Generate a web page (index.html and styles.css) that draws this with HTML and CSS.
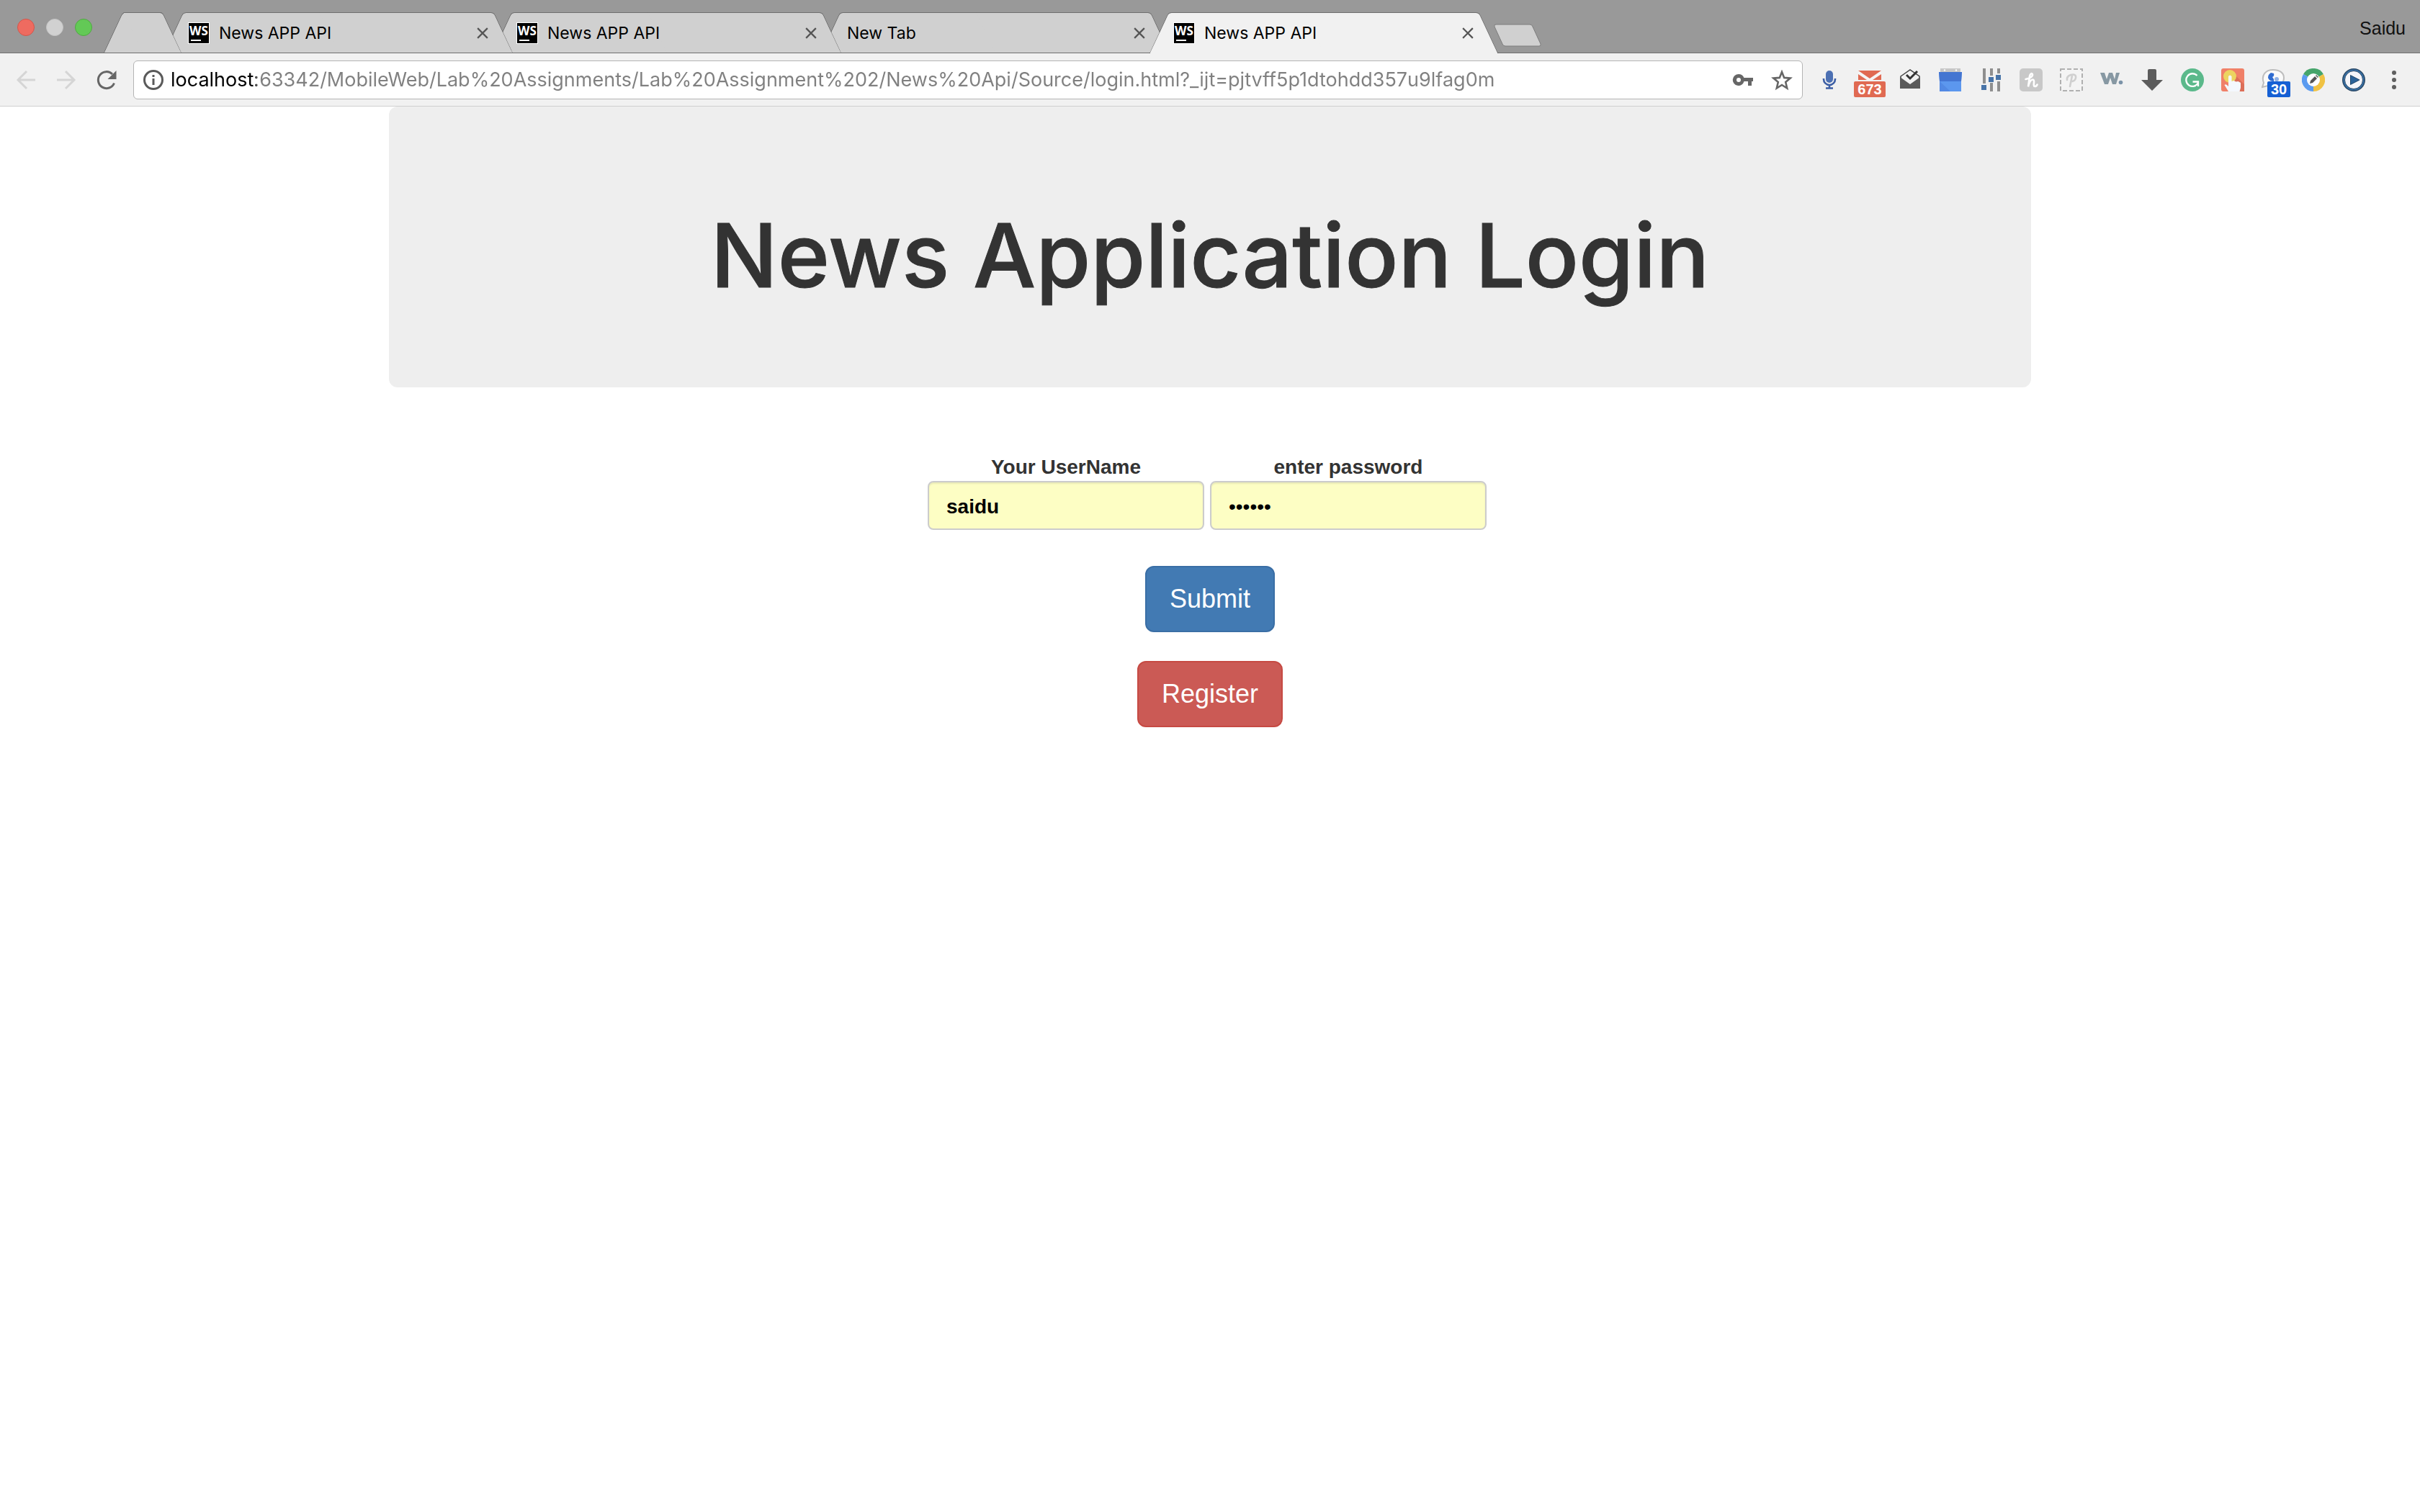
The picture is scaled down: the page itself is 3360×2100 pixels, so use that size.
FILE: index.html
```html
<!DOCTYPE html>
<html lang="en">
<head>
<meta charset="utf-8">
<title>News APP API</title>
<link rel="stylesheet" href="styles.css">
</head>
<body>
<header class="browser">
  <div class="strip">
    <div class="lights">
      <button class="light light-close" aria-label="Close window"></button>
      <button class="light light-min" aria-label="Minimize window"></button>
      <button class="light light-max" aria-label="Zoom window"></button>
    </div>
    <nav class="tabs" aria-label="Tabs">
      <div class="tab tab-pinned"></div>
      <div class="tab tab-2">
        <svg class="favicon" viewBox="0 0 30 30"><rect width="30" height="30" fill="#fff"/><rect x="1" y="1" width="28" height="28"/><text x="15" y="18" class="favicon-text">WS</text><rect x="4" y="24" width="14" height="2" fill="#fff"/></svg>
        <span class="tab-title">News APP API</span>
        <button class="tab-close" aria-label="Close tab"><svg viewBox="0 0 14 14"><path d="M1 1l12 12M13 1L1 13"/></svg></button>
      </div>
      <div class="tab tab-3">
        <svg class="favicon" viewBox="0 0 30 30"><rect width="30" height="30" fill="#fff"/><rect x="1" y="1" width="28" height="28"/><text x="15" y="18" class="favicon-text">WS</text><rect x="4" y="24" width="14" height="2" fill="#fff"/></svg>
        <span class="tab-title">News APP API</span>
        <button class="tab-close" aria-label="Close tab"><svg viewBox="0 0 14 14"><path d="M1 1l12 12M13 1L1 13"/></svg></button>
      </div>
      <div class="tab tab-4">
        <span class="tab-title">New Tab</span>
        <button class="tab-close" aria-label="Close tab"><svg viewBox="0 0 14 14"><path d="M1 1l12 12M13 1L1 13"/></svg></button>
      </div>
      <div class="tab tab-active">
        <svg class="favicon" viewBox="0 0 30 30"><rect width="30" height="30" fill="#fff"/><rect x="1" y="1" width="28" height="28"/><text x="15" y="18" class="favicon-text">WS</text><rect x="4" y="24" width="14" height="2" fill="#fff"/></svg>
        <span class="tab-title">News APP API</span>
        <button class="tab-close" aria-label="Close tab"><svg viewBox="0 0 14 14"><path d="M1 1l12 12M13 1L1 13"/></svg></button>
      </div>
      <button class="new-tab" aria-label="New tab"><svg viewBox="0 0 66 34"><path d="M3 1H50Q53 1 54 4L65 28Q66 31 63 31H16Q13 31 12 28L1 4Q0 1 3 1Z" fill="#d0d0d0" stroke="#7d7d7d" stroke-width="1"/></svg></button>
    </nav>
    <button class="profile">Saidu</button>
  </div>

  <div class="toolbar">
    <div class="nav-buttons">
      <button class="icon" aria-label="Back"><svg viewBox="0 0 32 32"><path d="M29 16H5M17 4L5 16l12 12" fill="none" stroke="#d5d5d5" stroke-width="3"/></svg></button>
      <button class="icon" aria-label="Forward"><svg viewBox="0 0 32 32"><path d="M3 16h24M15 4l12 12-12 12" fill="none" stroke="#d5d5d5" stroke-width="3"/></svg></button>
      <button class="icon" aria-label="Reload"><svg viewBox="0 0 32 32"><path d="M26.500 20.500A11.500 11.500 0 1 1 24 8" fill="none" stroke="#666" stroke-width="3"/><path d="M29.500 3v12H17.500z" fill="#666"/></svg></button>
    </div>
    <div class="omnibox">
      <svg class="info" viewBox="0 0 28 28"><circle cx="14" cy="14" r="12.500" fill="none" stroke="#5a5a5a" stroke-width="3"/><path d="M12.500 7h3v3h-3zM12.500 12h3v9h-3z" fill="#5a5a5a"/></svg>
      <input class="address" type="text" aria-label="Address" value="localhost:63342/MobileWeb/Lab%20Assignments/Lab%20Assignment%202/News%20Api/Source/login.html?_ijt=pjtvff5p1dtohdd357u9lfag0m">
      <button class="box-icon" aria-label="Saved passwords"><svg viewBox="0 0 32 32"><path fill-rule="evenodd" d="M10 8a8 8 0 0 1 7.400 5H30v5h-2v6h-5v-6h-5.500A8 8 0 1 1 10 8zm0 5a3 3 0 1 0 0 6 3 3 0 0 0 0-6z" fill="#666"/></svg></button>
      <button class="box-icon" aria-label="Bookmark"><svg viewBox="0 0 32 32"><path d="M16 5l3.200 7.900 8.500.7-6.500 5.500 2 8.400-7.200-4.500-7.200 4.500 2-8.400-6.500-5.500 8.500-.7z" fill="none" stroke="#666" stroke-width="2.600"/></svg></button>
    </div>
    <div class="extensions">
      <button class="icon" aria-label="Voice search"><svg viewBox="0 0 32 32"><rect x="11" y="3" width="10" height="17" rx="5" fill="#4c70b3"/><path d="M8 14v1a8 8 0 0 0 16 0v-1M16 22v6M11 27.500h10" fill="none" stroke="#3d5fa5" stroke-width="2.600"/></svg></button>
      <button class="icon" aria-label="Mail"><svg viewBox="0 0 32 32"><path d="M0 3h32v13H0z" fill="#e06a52"/><path d="M0 3L16 14 32 3v5L20 16h-8L0 8z" fill="#f5f5f5"/><path d="M3 3h26L16 11z" fill="#e06a52"/></svg><span class="badge badge-mail">673</span></button>
      <button class="icon" aria-label="Inbox"><svg viewBox="0 0 32 32"><path d="M3 11L16 2l13 9v16H3z" fill="#f1f1f1" stroke="#444" stroke-width="1.500"/><path d="M2 12l14 10 14-10v16H2z" fill="#5a5a5a"/><path d="M11 9l5 5L26 4" fill="none" stroke="#333" stroke-width="3"/></svg></button>
      <button class="icon" aria-label="Calendar"><svg viewBox="0 0 32 32"><path d="M2 0h28v6H2z" fill="#c6c6c6"/><circle cx="8" cy="2.500" r="1.200" fill="#fff"/><circle cx="24" cy="2.500" r="1.200" fill="#fff"/><path d="M0 5h32l-1 13v14H1V18z" fill="#5c97ee"/><path d="M0 5h32l-1 13H1z" fill="#4475d1"/><path d="M1 18l15 14H1z" fill="#5289e4"/></svg></button>
      <button class="icon" aria-label="Equalizer"><svg viewBox="0 0 32 32"><path d="M7 0v21M17 0v10M17 20v12M27 0v7M27 18v14" stroke="#8f8f8f" stroke-width="4"/><path d="M3 23h7v7H3zM13 12h7v7h-7zM23 9h7v7h-7z" fill="#4874a8"/></svg></button>
      <button class="icon" aria-label="Coupons"><svg viewBox="0 0 32 32"><rect width="32" height="32" rx="5" fill="#c8c8c8"/><path d="M8.500 15C14 14 18.500 11 18 8.500 17.500 6 14.500 7 14 11L12 25.500C13.500 19 16 15.500 18.500 15.500 22 15.500 18 25 21 25 22.500 25 24 24 24.500 22.500" fill="none" stroke="#fff" stroke-width="2.600" stroke-linecap="round"/></svg></button>
      <button class="icon" aria-label="Capture"><svg viewBox="0 0 32 32"><rect x="1" y="1" width="30" height="30" fill="#f4f4f4" stroke="#b0b0b0" stroke-width="2" stroke-dasharray="6 3"/><path d="M10 16C9 11 14 8.500 18.500 8.500 24 8.500 23 17 17 18M17 10L14 25" fill="none" stroke="#cfcfcf" stroke-width="2.600" stroke-linecap="round"/></svg></button>
      <button class="icon" aria-label="Wikiwand"><svg viewBox="0 0 32 32"><path d="M0 6h6l3 9 3-9h5l3 9 2-9h5l-5 16h-5l-3-9-3 9H6z" fill="#8798a3"/><circle cx="28.500" cy="19.500" r="2.800" fill="#7b93a8"/></svg></button>
      <button class="icon" aria-label="Downloads"><svg viewBox="0 0 32 32"><path d="M10 3q0-2 2-2h8q2 0 2 2v13h9L16 31 1 16h9z" fill="#5c5c5c"/></svg></button>
      <button class="icon" aria-label="Grammar check"><svg viewBox="0 0 32 32"><circle cx="16" cy="16" r="16" fill="#5bb98b"/><path d="M22.500 10A8.800 8.800 0 1 0 24 20M16.500 18.500h7.500v6.500" fill="none" stroke="#fff" stroke-width="2.300"/></svg></button>
      <button class="icon" aria-label="Touch tool"><svg viewBox="0 0 32 32"><rect width="32" height="32" rx="3" fill="#f08068"/><path d="M20 10l12 12v10H14z" fill="#dc6e58"/><circle cx="12" cy="11" r="9" fill="#ecd460"/><path d="M10 11q2-3 4.500 0v7l3-1 3 1.500 3-.5 3.500 2v7l-1.500 5H10l-5.500-9q2-2 5.500 2z" fill="#f4f8fd"/></svg></button>
      <button class="icon" aria-label="Calls"><svg viewBox="0 0 32 32"><path d="M16 2c9 0 15 4 15 11s-5 11-14 11H9L1 26l2-6C-1 9 6 2 16 2z" fill="#fafafa" stroke="#bdbdbd" stroke-width="2"/><path d="M13 6q-6 4-3 9 2 3 7 3v-3l-2-3q3-1 2-5z" fill="#2f6bd0"/><circle cx="21" cy="15" r="3" fill="#8fb0e4"/></svg><span class="badge badge-calls">30</span></button>
      <button class="icon" aria-label="Page editor"><svg viewBox="0 0 32 32"><path d="M16 16L2.100 8A16 16 0 0 1 29.900 8z" fill="#46a56b"/><path d="M16 16L29.900 8A16 16 0 0 1 16 32z" fill="#f0c243"/><path d="M16 16v16A16 16 0 0 1 2.100 8z" fill="#5b9bf0"/><circle cx="16" cy="16" r="9" fill="#fff"/><path d="M11 21l1-4 6-6 3 3-6 6zM19 10l1-1 3 3-1 1z" fill="#555"/></svg></button>
      <button class="icon" aria-label="Play"><svg viewBox="0 0 32 32"><circle cx="16" cy="16" r="16" fill="#2d4a66"/><circle cx="16" cy="16" r="14.500" fill="#3570a8"/><circle cx="16" cy="16" r="12.500" fill="#f4f5fa" stroke="#2d4a66"/><path d="M11.500 9.500L24 16l-12.500 6.500z" fill="#2a6299" stroke="#23486b"/></svg></button>
      <button class="icon" aria-label="Menu"><svg viewBox="0 0 32 32"><g fill="#5f5f5f"><circle cx="16" cy="6" r="3"/><circle cx="16" cy="16" r="3"/><circle cx="16" cy="26" r="3"/></g></svg></button>
    </div>
  </div>
</header>

<main class="container">
  <div class="jumbotron"><h1>News Application Login</h1></div>
  <form class="login">
    <div class="fields">
      <div class="field">
        <label for="username">Your UserName</label>
        <input id="username" class="form-control" type="text" value="saidu">
      </div>
      <div class="field">
        <label for="password">enter password</label>
        <input id="password" class="form-control form-control-password" type="password" value="secret">
      </div>
    </div>
    <button class="btn btn-primary" type="submit">Submit</button>
    <button class="btn btn-danger" type="button">Register</button>
  </form>
</main>
</body>
</html>
```

FILE: styles.css
```css
* {
  box-sizing: border-box;
}

body {
  margin: 0;
  background: #fff;
  color: #333;
  font-family: "Liberation Sans", Arial, sans-serif;
  font-size: 28px;
}

button,
input {
  font-family: inherit;
}

button {
  padding: 0;
  border: 0;
  background: none;
}

svg {
  display: block;
}

/* Tab strip */

.strip {
  display: flex;
  align-items: flex-start;
  background: #999;
  border-bottom: 1px solid #6f6f6f;
}

.lights {
  display: flex;
  flex: none;
  gap: 16px;
  width: 144px;
  padding: 26px 0 0 24px;
}

.light {
  width: 24px;
  height: 24px;
  border: 1px solid #d2564c;
  border-radius: 50%;
  background: #ee6b60;
}

.light-min {
  border-color: #c4c4c4;
  background: #d1d1d1;
}

.light-max {
  border-color: #50a842;
  background: #63c956;
}

.tabs {
  display: flex;
  flex: 1;
  padding-top: 17px;
}

.tab {
  position: relative;
  isolation: isolate;
  display: flex;
  align-items: center;
  flex: 0 1 484px;
  height: 56px;
  margin-right: -28px;
  padding: 2px 34px 0 33px;
  --tab-color: #d0d0d0;
}

/* Each tab is two slanted halves that overlap in the middle */
.tab::before,
.tab::after {
  content: "";
  position: absolute;
  z-index: -1;
  top: 0;
  bottom: 0;
  border-top: 1px solid #6f6f6f;
  background: var(--tab-color);
  background-clip: padding-box;
}

.tab::before {
  left: 13px;
  right: calc(50% - 14px);
  border-left: 1px solid rgba(0, 0, 0, 0.35);
  border-top-left-radius: 5px;
  transform: skewX(-25deg);
}

.tab::after {
  left: calc(50% - 14px);
  right: 13px;
  border-right: 1px solid rgba(0, 0, 0, 0.35);
  border-top-right-radius: 5px;
  transform: skewX(25deg);
}

.tab-pinned {
  z-index: 4;
  flex-basis: 108px;
  margin-right: -24px;
}

.tab-2 {
  z-index: 3;
}

.tab-3 {
  z-index: 2;
}

.tab-4 {
  z-index: 1;
}

.tab-active {
  z-index: 5;
  height: 57px;
  margin-right: -6px;
  margin-bottom: -1px;
  padding-bottom: 1px;
  --tab-color: #f1f1f1;
}

.favicon {
  flex: none;
  width: 30px;
  height: 30px;
  margin-right: 10px;
}

.favicon-text {
  fill: #fff;
  font: bold 17px "Open Sans", sans-serif;
  text-anchor: middle;
}

.tab-title {
  flex: 1;
  padding-left: 3px;
  color: #000;
  font-family: Inter, sans-serif;
  font-size: 23px;
  line-height: 28px;
  white-space: nowrap;
}

.tab-close svg {
  width: 16px;
  height: 16px;
  fill: none;
  stroke: #555;
  stroke-width: 2;
}

.new-tab {
  align-self: flex-start;
  padding-top: 16px;
}

.new-tab svg {
  width: 66px;
  height: 34px;
}

.profile {
  flex: none;
  padding: 25px 20px 0 0;
  color: #111;
  font-size: 25px;
  line-height: 28px;
}

/* Toolbar */

.toolbar {
  display: flex;
  align-items: center;
  height: 74px;
  padding: 0 20px;
  background: #f1f1f1;
  border-bottom: 1px solid #d0d0d0;
}

.nav-buttons,
.extensions {
  display: flex;
  flex: none;
  gap: 24px;
}

.icon {
  position: relative;
  width: 32px;
  height: 32px;
}

.icon svg {
  width: 32px;
  height: 32px;
}

.omnibox {
  display: flex;
  flex: 1;
  align-items: center;
  height: 54px;
  margin: 0 21px;
  padding: 0 12px 0 13px;
  background: #fff;
  border: 1px solid #b4b4b4;
  border-radius: 6px;
}

.info {
  flex: none;
  width: 28px;
  height: 28px;
  margin-right: 10px;
}

.address {
  flex: 1;
  min-width: 0;
  height: 40px;
  padding: 0;
  border: 0;
  color: #808080;
  background: linear-gradient(90deg, #000 119px, #808080 119px);
  -webkit-background-clip: text;
  background-clip: text;
  -webkit-text-fill-color: transparent;
  font-family: Inter, sans-serif;
  font-size: 27px;
}

.box-icon {
  flex: none;
  margin-left: 22px;
}

.box-icon svg {
  width: 32px;
  height: 32px;
}

.badge {
  position: absolute;
  top: 18px;
  height: 22px;
  border-radius: 2px;
  color: #fff;
  font-size: 20px;
  font-weight: bold;
  line-height: 23px;
  text-align: center;
}

.badge-mail {
  left: -6px;
  width: 44px;
  background: #e06a52;
}

.badge-calls {
  left: 8px;
  width: 32px;
  background: #1560d4;
}

/* Page */

.container {
  max-width: 2280px;
  margin: 0 auto;
}

.jumbotron {
  padding: 138px 0 114px;
  border-radius: 12px;
  background: #eee;
}

.jumbotron h1 {
  margin: 0;
  font-family: Inter, sans-serif;
  font-size: 123px;
  font-weight: 500;
  line-height: 138px;
  text-align: center;
  -webkit-text-stroke: 1px #333;
}

.login {
  display: flex;
  flex-direction: column;
  align-items: center;
  gap: 40px;
  padding-top: 92px;
}

.fields {
  display: flex;
  gap: 8px;
  margin-bottom: 10px;
  padding-right: 8px;
}

.field {
  display: flex;
  flex-direction: column;
  align-items: center;
}

.field label {
  font-weight: bold;
  line-height: 38px;
}

.form-control {
  width: 384px;
  height: 68px;
  padding: 4px 24px 0;
  border: 2px solid #ccc;
  border-radius: 8px;
  background: #fdfec4;
  box-shadow: inset 0 2px 2px rgba(0, 0, 0, 0.08);
  color: #000;
  font-size: 28px;
  font-weight: bold;
}

.form-control-password {
  font-weight: normal;
}

.btn {
  height: 92px;
  padding: 0 32px;
  border: 2px solid #3a6ea5;
  border-radius: 12px;
  background: #427ab3;
  color: #fff;
  font-size: 36px;
}

.btn-danger {
  border-color: #c64a43;
  background: #cb5a55;
}
```
